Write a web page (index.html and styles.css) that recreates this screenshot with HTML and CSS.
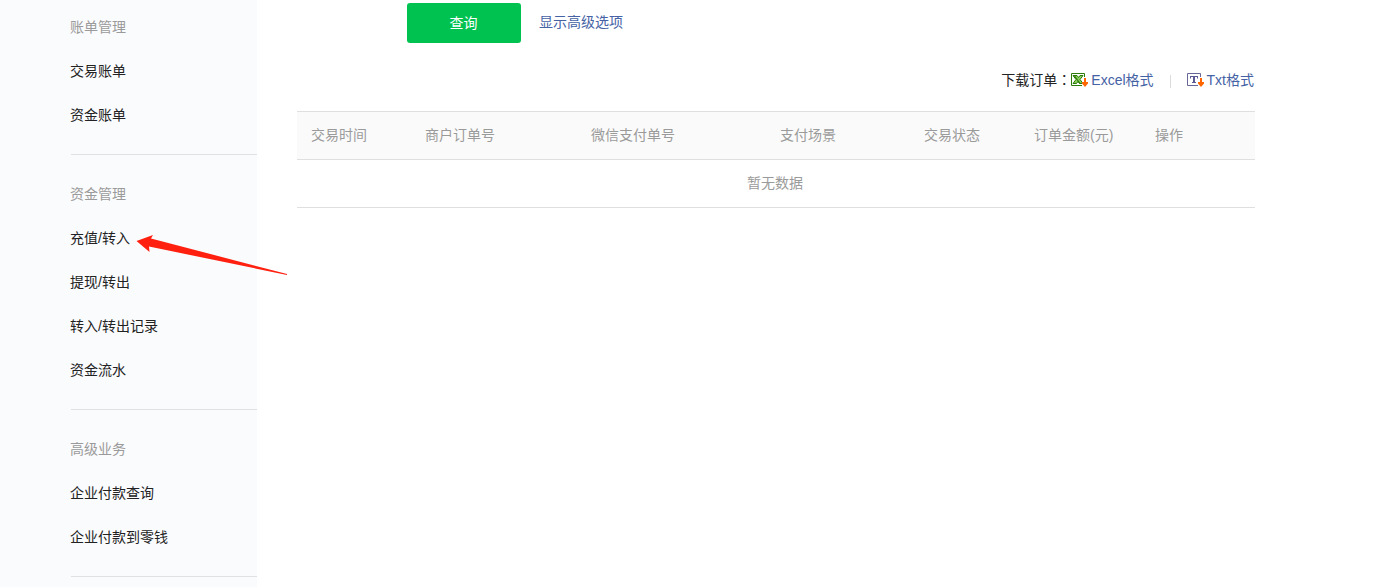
FILE: index.html
```html
<!DOCTYPE html>
<html lang="zh-CN">
<head>
<meta charset="utf-8">
<title>交易订单</title>
<link rel="stylesheet" href="styles.css">
</head>
<body>
<div class="page">
  <nav class="sidebar">
    <section class="group">
      <h2 class="group-title">账单管理</h2>
      <a class="link">交易账单</a>
      <a class="link">资金账单</a>
    </section>
    <section class="group">
      <h2 class="group-title">资金管理</h2>
      <a class="link">充值/转入</a>
      <a class="link">提现/转出</a>
      <a class="link">转入/转出记录</a>
      <a class="link">资金流水</a>
    </section>
    <section class="group">
      <h2 class="group-title">高级业务</h2>
      <a class="link">企业付款查询</a>
      <a class="link">企业付款到零钱</a>
    </section>
  </nav>
  <main class="main">
    <div class="actions">
      <button class="btn">查询</button>
      <a class="more">显示高级选项</a>
    </div>
    <div class="download">
      <span class="label">下载订单<span class="colon" lang="zh-TW">：</span></span>
      <svg class="icon" width="17" height="14" viewBox="0 0 17 14">
        <path d="M.5.5h13v12H.5z" fill="#fff" stroke="#2c7a0a"/>
        <path d="M2 2.500h4l1.500 2L9 2.500h3L9 6.500l3 4H8.500l-1.500-2-1.500 2H2l3-4z" fill="#8ccf5c" stroke="#2c7a0a"/>
        <path d="M3.500 3l5.500 7.500" stroke="#2c7a0a" stroke-width="1.200"/>
        <path d="M12 4h4v4h1v6h-6V8h1z" fill="#fff"/>
        <path d="M13 5h2v4h2v1.500L14 14l-3-3.500V9h2z" fill="#ff6600"/>
      </svg>
      <a class="format">Excel格式</a>
      <span class="divider"></span>
      <svg class="icon" width="17" height="14" viewBox="0 0 17 14">
        <path d="M.5.5h13v12H.5z" fill="#fff" stroke="#666699"/>
        <path d="M3 3h8v2.500h-1V4H8v5h1v1H5V9h1V4H4v1.500H3z" fill="#5c5c94"/>
        <path d="M12 4h4v4h1v6h-6V8h1z" fill="#fff"/>
        <path d="M13 5h2v4h2v1.500L14 14l-3-3.500V9h2z" fill="#ff6600"/>
      </svg>
      <a class="format">Txt格式</a>
    </div>
    <table class="orders">
      <colgroup><col class="c1"><col class="c2"><col class="c3"><col class="c4"><col class="c5"><col class="c6"><col></colgroup>
      <thead><tr><th>交易时间</th><th>商户订单号</th><th>微信支付单号</th><th>支付场景</th><th>交易状态</th><th>订单金额(元)</th><th>操作</th></tr></thead>
      <tbody><tr><td colspan="7">暂无数据</td></tr></tbody>
    </table>
  </main>
  <svg class="pointer" width="152" height="42" viewBox="0 0 152 42"><path d="M.5 7L17 1 15 4.500 151 40V41L13 12.500 13.500 18z" fill="#ff2010"/></svg>
</div>
</body>
</html>
```
FILE: styles.css
```css
* { box-sizing: border-box; }
body { margin: 0; background: #fff; color: #222; font: 14px/20px "Liberation Sans", "Noto Sans CJK SC", sans-serif; }
.page { position: relative; display: flex; height: 587px; overflow: hidden; }
.sidebar { width: 257px; padding-left: 71px; background: #fafbfd; }
.group { padding: 17px 0; border-bottom: 1px solid #e0e1e5; }
.group:first-child { padding-top: 5px; }
.group-title { margin: 0 0 0 -1px; font-size: 14px; line-height: 44px; font-weight: 400; color: #9a9a9a; }
.link { display: block; margin-left: -1px; line-height: 44px; }
.main { width: 958px; margin-left: 40px; }
.actions { display: flex; padding: 3px 0 0 110px; }
.btn { width: 114px; height: 40px; padding: 0 1px 0 0; border: 0; border-radius: 3px; background: #00c250; color: #fff; font: inherit; }
.more { margin: 9px 0 0 18px; color: #4562a5; }
.download { display: flex; align-items: center; justify-content: flex-end; height: 20px; margin: 27px 0 21px; padding-right: 1px; }
.colon { font-family: "Noto Sans CJK TC", sans-serif; line-height: 1; }
.icon { margin-right: 3px; }
.format { color: #4562a5; }
.divider { width: 1px; height: 13px; margin: 2px 16px 0; background: #dcdcdc; }
.orders { width: 958px; table-layout: fixed; border-collapse: collapse; color: #9a9a9a; }
.orders tr { height: 48px; border-bottom: 1px solid #dedfe1; }
.orders thead tr { background: #fafafa; border-top: 1px solid #dedfe1; }
.orders th { padding: 0 0 2px; text-align: left; font-weight: 400; }
.orders th:first-child { padding-left: 14px; }
.orders td { padding: 0 2px 2px 0; text-align: center; }
.c1 { width: 128px; } .c2 { width: 166px; } .c3 { width: 189px; } .c4 { width: 144px; } .c5 { width: 110px; } .c6 { width: 121px; }
.pointer { position: absolute; left: 136px; top: 234px; }
```
